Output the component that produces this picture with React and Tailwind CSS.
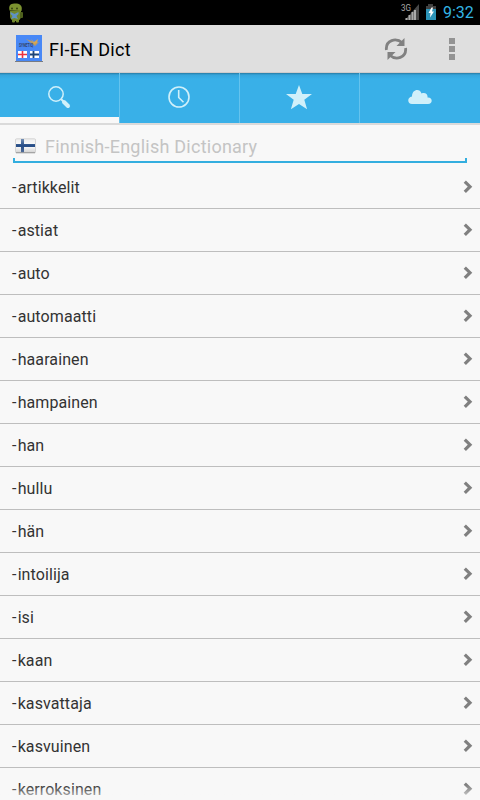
const words = [
  '-artikkelit', '-astiat', '-auto', '-automaatti', '-haarainen', '-hampainen', '-han', '-hullu',
  '-hän', '-intoilija', '-isi', '-kaan', '-kasvattaja', '-kasvuinen', '-kerroksinen',
];

function Robot() {
  return (
    <svg className="ml-2 h-5 w-4" viewBox="0 0 16 20">
      <path d="M1.500 7.500C0 1 4 .5 7.500.5S15 2 13.500 8z" fill="#7c9230" />
      <path d="M2 8h11v5c0 3-2 5-5.500 5S2 16 2 13z" fill="#71872b" />
      <rect x="12" y="9" width="3" height="6" rx="1" fill="#4e601d" />
      <rect x="4" y="15" width="3" height="4.500" rx="1" fill="#71872b" />
      <rect x="8" y="15" width="3" height="4.500" rx="1" fill="#71872b" />
      <circle cx="4" cy="5.500" r=".9" fill="#303a12" />
      <circle cx="9" cy="5.500" r=".9" fill="#303a12" />
      <path d="M2.500 9l4 2 4-2v2l-2 2 1.500 3-3.500-1-3.500 1 1.500-3-2-2z" fill="#5e92c4" />
    </svg>
  );
}

function AppIcon() {
  return (
    <svg className="ml-[15px] h-7 w-7" viewBox="0 0 28 28">
      <rect x="1" width="26" height="26" fill="#4888f6" />
      <rect y="26" width="28" height="1" fill="#777b83" />
      <path d="M11 4l6 2 2 2 5-1-4 4-4-3z" fill="#b99a68" />
      <path d="M16 4l3 3 4-3-1 4-3 1z" fill="#d9a750" />
      <text x="4" y="12" fontSize="5" fontWeight="700" fill="#34436b" textLength="14" lengthAdjust="spacingAndGlyphs">SYNETIQ</text>
      <rect x="3" y="16" width="9" height="7" fill="#fff" />
      <path d="M7.500 16v7M3 19.500h9" stroke="#ec3340" strokeWidth="1.600" />
      <rect x="15" y="16" width="9" height="7" fill="#fff" />
      <path d="M18.500 16v7M15 19.500h9" stroke="#1c4478" strokeWidth="1.800" />
    </svg>
  );
}

function StatusBar() {
  return (
    <div className="flex h-[25px] items-center bg-black">
      <Robot />
      <div className="flex-1" />
      <svg className="h-[25px] w-[40px]" viewBox="0 0 40 25">
        <text x="1" y="11" fontSize="8.500" fill="#aaa" textLength="10" lengthAdjust="spacingAndGlyphs">3G</text>
        <path d="M5 20L19 4v16z" fill="#484848" />
        <path d="M6.500 20v-2M9.500 20v-5M12.500 20v-8M15 20V10" stroke="#aaa" strokeWidth="2" />
        <path d="M28 4h5v2h3v4H26V6h2z" fill="#414141" />
        <rect x="26" y="9" width="10" height="11" fill="#2c94b8" />
        <path d="M31.500 7.500L28.500 13h2l-.5 4.500 4-6h-2l1-4z" fill="#fff" />
      </svg>
      <span className="ml-[3px] w-[37px] text-[16px] leading-[25px] text-[#33b5e5]">9:32</span>
    </div>
  );
}

function Header() {
  return (
    <header className="flex h-12 items-center bg-[#dfdfdf] border-b border-[#cfcccc]">
      <AppIcon />
      <h1 className="ml-1.5 pt-[2px] text-[18px] leading-6 tracking-[0.3px] text-black">FI-EN Dict</h1>
      <svg className="ml-auto h-6 w-6" viewBox="0 0 24 24" fill="none" stroke="#818181" strokeWidth="2.800">
        <path d="M2.400 13C1.500 3 12 .2 18.500 6" />
        <path d="M21.600 11C22.500 21 12 23.800 5.500 18" />
        <path d="M20.500 1v8h-8z" fill="#818181" stroke="none" />
        <path d="M3.500 23v-8h8z" fill="#818181" stroke="none" />
      </svg>
      <div className="ml-[41px] mr-[25px] flex flex-col gap-[2px]">
        <i className="size-1.5 bg-[#939393]" />
        <i className="size-1.5 bg-[#939393]" />
        <i className="size-1.5 bg-[#939393]" />
      </div>
    </header>
  );
}

function Tabs() {
  return (
    <nav className="grid h-[50px] grid-cols-4 bg-linear-to-b from-[#277ca5] from-0% via-[#36a6dc] via-4% to-[#39b0e8] to-12%">
      <div className="flex justify-center border-r border-[#65c3ee]">
        <div className="flex flex-1 justify-center border-b-[6px] border-[#f8f8f8] pr-px">
          <svg className="mt-[12px] h-6 w-6" viewBox="0 0 24 24" fill="none">
            <circle cx="9" cy="9" r="7.200" stroke="#d0f0fa" strokeWidth="1.500" />
            <path d="M14 14l2.500 2.500" stroke="#d0f0fa" strokeWidth="2" />
            <path d="M17 17l4 4" stroke="#d0f0fa" strokeWidth="4" strokeLinecap="round" />
          </svg>
        </div>
      </div>
      <div className="flex justify-center border-r border-[#65c3ee] pr-px">
        <svg className="mt-[12px] h-6 w-6" viewBox="0 0 24 24" fill="none" stroke="#d0f0fa" strokeWidth="1.600">
          <circle cx="12" cy="12" r="10" />
          <path d="M11.700 5v7.500l4.800 4.800" />
        </svg>
      </div>
      <div className="flex justify-center border-r border-[#65c3ee] pr-px">
        <svg className="mt-[12px] h-[25px] w-[26px]" viewBox="0 0 26 26" preserveAspectRatio="none" fill="#d0f0fa">
          <path d="M13 0l3.300 9.300H26l-7.700 6.100 2.800 9.900-8.100-5.600-8.100 5.600 2.800-9.900L0 9.300h9.700z" />
        </svg>
      </div>
      <div className="flex justify-center">
        <svg className="mt-[17px] h-[14px] w-6" viewBox="0 0 24 14" fill="#d0f0fa">
          <path d="M4 14C-1 14-1 7 4 6.500 4-1 12-2 13.500 3.500 17 2 20 4 19.500 7.500 25 7 25 14 20 14z" />
        </svg>
      </div>
    </nav>
  );
}

function FinnishFlag() {
  return (
    <svg className="ml-[2px] mt-[13px] h-4 w-[21px]" viewBox="0 0 21 16">
      <defs>
        <linearGradient id="cloth" x2="0" y2="1">
          <stop stopColor="#ededed" /><stop offset=".5" stopColor="#fff" /><stop offset="1" stopColor="#d1d1d1" />
        </linearGradient>
        <linearGradient id="cross" x2="0" y2="1">
          <stop stopColor="#7590b4" /><stop offset=".5" stopColor="#264d87" /><stop offset="1" stopColor="#536f9b" />
        </linearGradient>
      </defs>
      <rect x=".5" y=".8" width="20" height="14" rx="1" fill="url(#cloth)" stroke="#c9c9c9" strokeWidth=".7" />
      <path d="M6 1h3v5h11v3H9v5.500H6V9H1V6h5z" fill="url(#cross)" />
      <path d="M1 14.700h19" stroke="#999" />
    </svg>
  );
}

export default function App() {
  return (
    <div className="relative h-[800px] w-[480px] overflow-hidden bg-[#f8f8f8] font-[Roboto,sans-serif]">
      <StatusBar />
      <Header />
      <Tabs />
      <div className="h-[43px] border-t-2 border-[#dadada] px-[13px]">
        <div className="flex h-[38px]">
          <FinnishFlag />
          <span className="ml-[9px] mt-[10px] text-[18px] leading-6 tracking-[0.24px] text-[#c4c4c4]">Finnish-English Dictionary</span>
        </div>
        <div className="-mt-[5px] h-[5px] border-x-2 border-b-2 border-[#33aedf]" />
      </div>
      <ul>
        {words.map((word) => (
          <li key={word} className="flex h-[43px] items-center justify-between border-b border-[#bebebe] pl-3 pr-[7px] text-[16px] tracking-[0.1px] text-[#333]">
            <span className="pt-[2px]"><span className="tracking-[1.2px]">-</span>{word.slice(1)}</span>
            <svg className="-mt-[1px] h-[14px] w-[10px]" viewBox="0 0 10 14" fill="none" stroke="#808080" strokeWidth="3.200">
              <path d="M1.800 1.600L7 6.700l-5.200 5.100" />
            </svg>
          </li>
        ))}
      </ul>
      <div className="absolute inset-x-0 bottom-0 h-[15px] bg-linear-to-b from-[#f8f8f800] to-[#f8f8f8cc]" />
    </div>
  );
}
